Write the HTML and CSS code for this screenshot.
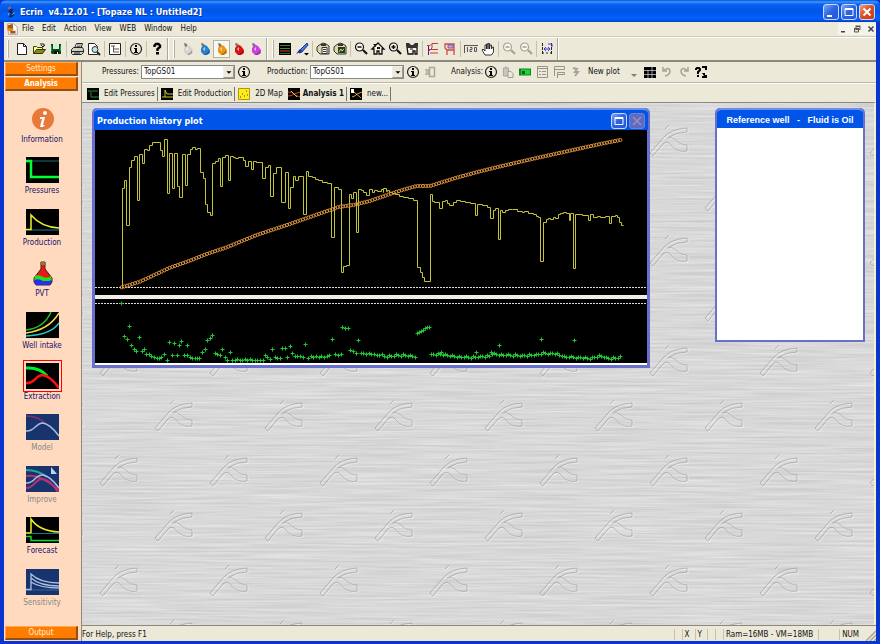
FILE: index.html
```html
<!DOCTYPE html>
<html lang="en">
<head>
<meta charset="utf-8">
<title>Ecrin v4.12.01 - [Topaze NL : Untitled2]</title>
<link rel="stylesheet" href="styles.css">
</head>
<body>
<svg class="defs" aria-hidden="true">
  <symbol id="info" viewBox="0 0 16 16"><circle cx="8" cy="8" r="5.5" fill="none" stroke="#222" stroke-width="1.2"/><path d="M7 4h2v2H7zM6 7h3v4h1v1H6v-1h1V8H6z"/></symbol>
  <symbol id="drop" viewBox="0 0 16 16"><path d="M5 2l3 2 2 1 3 4v3l-3 2H7l-3-3V7l2-2z" fill="currentColor"/><path d="M4 2l3 1v2L5 6z" fill="#777"/><path d="M6 8l2-2v4z" fill="#fff" opacity=".7"/><path d="M12 9v3l-3 2H7l4-3z" opacity=".3"/></symbol>
  <symbol id="lens" viewBox="0 0 16 16"><circle cx="6.500" cy="6" r="4" fill="#f8f8ef" stroke="currentColor" stroke-width="1.2"/><path d="M10 9l4 4" stroke="currentColor" stroke-width="2.200"/><path d="M4.500 6h4" stroke="currentColor" stroke-width="1.500"/></symbol>
  <symbol id="clip" viewBox="0 0 16 16"><path d="M3 5l3-2 2-1 3 1 3 2v8H5l-3-3V6z" fill="#d9d8ac" stroke="#333"/><path d="M6 3h5v2H6z" fill="#333"/></symbol>
  <symbol id="home" viewBox="0 0 16 16"><path d="M2 8l6-6 6 6h-2v5H9v-3H7v3H4V8z" fill="#f3f2e6" stroke="#111" stroke-width="1.300"/><path d="M3 3h3v3M7 6h3v2H7z" fill="#111"/></symbol>
</svg>
<div class="app">
  <header class="titlebar">
    <svg class="i16" viewBox="0 0 16 16"><path d="M5 2h3v3H5z" fill="#c05a48"/><path d="M8 4l3 1-2 2 3 4-3 3H5l3-4-3-3z" fill="#0b2668"/><path d="M4 9l2 1-1 2z" fill="#6cc"/><path d="M9 11l3-2" stroke="#ad7"/></svg>
    <h1>Ecrin&nbsp; v4.12.01 - [Topaze NL : Untitled2]</h1>
    <div class="winbtns">
      <button class="wb" aria-label="Minimize"><svg viewBox="0 0 14 14"><path d="M3 10h5v2H3z" fill="#fff"/></svg></button>
      <button class="wb" aria-label="Maximize"><svg viewBox="0 0 14 14"><path d="M3 3.500h8v7H3z" fill="none" stroke="#fff"/><path d="M3 3h8v2H3z" fill="#fff"/></svg></button>
      <button class="wb close" aria-label="Close"><svg viewBox="0 0 14 14"><path d="M3.500 3.500l7 7m0-7l-7 7" stroke="#fff" stroke-width="2"/></svg></button>
    </div>
  </header>
  <div class="frame">
    <nav class="menubar">
      <svg class="i16" viewBox="0 0 16 16"><path d="M3 2h7l4 4v8H4z" fill="#fff" stroke="#99a"/><circle cx="6" cy="7" r="3.500" fill="#e78a0c"/><path d="M3 4l6-2v5H4zM6 10h6v3H6z" fill="#a85514"/></svg>
      <a href="#">File</a><a href="#">Edit</a><a href="#">Action</a><a href="#">View</a><a href="#">WEB</a><a href="#">Window</a><a href="#">Help</a>
      <div class="mdi">
        <button aria-label="Minimize document"><svg viewBox="0 0 10 10"><path d="M3 7h4v1.500H3z" fill="#444"/></svg></button>
        <button aria-label="Restore document"><svg viewBox="0 0 10 10"><path d="M4 2.500h4v3H4zM2.500 5h4v3h-4z" fill="#ece9d8" stroke="#555"/><path d="M3.500 2h5M2 4.500h5" stroke="#555"/></svg></button>
        <button aria-label="Close document"><svg viewBox="0 0 10 10"><path d="M2.500 2.500l5 5m0-5l-5 5" stroke="#444" stroke-width="1.500"/></svg></button>
      </div>
    </nav>
    <div class="toolbar">
      <i class="grip"></i>
      <button class="tb" aria-label="New"><svg viewBox="0 0 16 16"><path d="M3.500 2.500h6l3 3v8h-9z" fill="#fff" stroke="#222"/><path d="M9.500 2.500v3h3" fill="none" stroke="#222"/></svg></button>
      <button class="tb" aria-label="Open"><svg viewBox="0 0 16 16"><path d="M2.500 12.500v-7h3l1 1h5v2" fill="#ef9" stroke="#440"/><path d="M2.500 12.500l3-4h9l-3 4z" fill="#8a8a10" stroke="#330"/><path d="M9 3h4v2l1-1-2 2-2-2" fill="none" stroke="#222"/></svg></button>
      <button class="tb" aria-label="Save"><svg viewBox="0 0 16 16"><path d="M3 3h10v10H4l-1-1z" fill="#0b4d18"/><path d="M5 3h6v5H5z" fill="#d5ecd5"/><path d="M3 5h1v5H3zM12 5h1v5h-1z" fill="#16a23a"/><path d="M6 10h5v3H6z" fill="#111"/><path d="M9 11h1v2H9z" fill="#fff"/></svg></button>
      <i class="sep"></i>
      <button class="tb" aria-label="Print"><svg viewBox="0 0 16 16"><path d="M5.500 7l2-4.500h6L12 7" fill="#fff" stroke="#222"/><path d="M8 4h4M7.500 5.500h4" stroke="#222" stroke-width=".7"/><path d="M2.500 8.500l2-2h9l1 2v3l-2 2h-9l-1-1z" fill="#cfcfc6" stroke="#222"/><path d="M3 10.500h11M5 12h6" stroke="#222"/></svg></button>
      <button class="tb" aria-label="Print preview"><svg viewBox="0 0 16 16"><path d="M2.500 2.500h6l3 3v8h-9z" fill="#fff" stroke="#222"/><circle cx="9" cy="8.500" r="3" fill="#bde6e8" stroke="#333"/><path d="M11 11l3 3" stroke="#222" stroke-width="2"/></svg></button>
      <i class="sep"></i>
      <button class="tb" aria-label="Tree"><svg viewBox="0 0 16 16"><path d="M2.500 2.500h11v11h-11z" fill="#fff" stroke="#222"/><path d="M4 5h4M6.500 5v6M6.500 8h3M6.500 11h4" stroke="#555"/><path d="M9 7h3v2H9zM9 10h3v2H9z" fill="#aaa"/></svg></button>
      <i class="sep"></i>
      <button class="tb" aria-label="Information"><svg><use href="#info"/></svg></button>
      <i class="sep"></i>
      <button class="tb" aria-label="Help"><svg viewBox="0 0 16 16"><path d="M5.500 6V4.500L7 3h2.500L11 4.500V6L8.500 8v2" fill="none" stroke="#000" stroke-width="2.400"/><path d="M7 11h3v2.500H7z"/></svg></button>
      <i class="edge"></i><i class="grip"></i>
      <button class="tb white" aria-label="Clear fluid"><svg><use href="#drop"/></svg></button>
      <button class="tb blue" aria-label="Water"><svg><use href="#drop"/></svg></button>
      <button class="tb orange pressed" aria-label="Oil"><svg><use href="#drop"/></svg></button>
      <button class="tb red" aria-label="Gas"><svg><use href="#drop"/></svg></button>
      <button class="tb pink" aria-label="Condensate"><svg><use href="#drop"/></svg></button>
      <i class="edge"></i><i class="grip tight"></i>
      <button class="tb" aria-label="List"><svg viewBox="0 0 16 16"><path d="M2 2h12v12H2z"/><path d="M3 4.500h10M3 7.500h10" stroke="#3a8a30"/><path d="M3 12.500h10" stroke="#2a7028"/><path d="M3 10h10" stroke="#e33"/></svg></button>
      <button class="tb" aria-label="Pen"><svg viewBox="0 0 16 16"><path d="M13 2l1 2-6 7-3 1 1-3z" fill="#5378d8" stroke="#16308e"/><path d="M2 13l4-5 2 2z" fill="#122a9c"/><path d="M10 12h5l-2.500 2.500z"/></svg></button>
      <i class="sep"></i>
      <button class="tb" aria-label="Copy"><svg viewBox="0 0 16 16"><use href="#clip"/><path d="M7 6.500h5v6H7z" fill="#fff" stroke="#333"/><path d="M8 8.500h3M8 10.500h3" stroke="#333"/></svg></button>
      <button class="tb" aria-label="Copy picture"><svg viewBox="0 0 16 16"><use href="#clip"/><path d="M6 6h7v6H6z" fill="#273b20"/><path d="M7 11l2-3 1 2 2-2" stroke="#cde36b" fill="none"/></svg></button>
      <i class="sep"></i>
      <button class="tb" aria-label="Zoom out"><svg><use href="#lens"/></svg></button>
      <button class="tb" aria-label="Reset zoom"><svg><use href="#home"/></svg></button>
      <button class="tb" aria-label="Zoom in"><svg viewBox="0 0 16 16"><use href="#lens"/><path d="M6.500 4v4" stroke="#000" stroke-width="1.500"/></svg></button>
      <button class="tb" aria-label="Zoom all"><svg viewBox="0 0 16 16"><path d="M3 6h10v7h-2v-3H9v3H4z" fill="#f3f2e6" stroke="#111" stroke-width="1.300"/><path d="M2 2h3l2 2h2l2-2h3v3l-2 2H4L2 5z" fill="#333"/><path d="M6 8h3" stroke="#111"/></svg></button>
      <i class="sep"></i>
      <button class="tb" aria-label="Axes"><svg viewBox="0 0 16 16"><path d="M3.500 5v9" stroke="#22c"/><path d="M2 4.500h3l2-2h6M7 3v4l-4 4M4 8.500h9M5 12h8" fill="none" stroke="#c43a32"/></svg></button>
      <button class="tb" aria-label="Overlay"><svg viewBox="0 0 16 16"><path d="M5 14V9L3 7V3h9v11M5 9h7" fill="none" stroke="#d04a40" stroke-width="1.300"/><path d="M6 4h5v3H6z" fill="#c7b0df" stroke="#75a"/></svg></button>
      <i class="sep"></i>
      <button class="tb" aria-label="Scale"><svg viewBox="0 0 16 16"><path d="M1.500 4v8M1 4.500h14M4.500 6v5M7 6.500h2v2H7v2h2M11.500 6.500h2v4h-2z" fill="none" stroke="#555"/></svg></button>
      <button class="tb" aria-label="Pan"><svg viewBox="0 0 16 16"><path d="M5 14l-3-5 1-1 2 2V4h1.500v4V3H8v5-5.500h1.500V8l.5-4h1.500v4l1-2h1v5l-2 3z" fill="#fff" stroke="#222" stroke-width=".9"/></svg></button>
      <i class="sep"></i>
      <button class="tb off" aria-label="Previous zoom"><svg><use href="#lens"/></svg></button>
      <button class="tb off" aria-label="Next zoom"><svg><use href="#lens"/></svg></button>
      <i class="sep"></i>
      <button class="tb" aria-label="Fit scale"><svg viewBox="0 0 16 16"><path d="M3.500 2v12M12.500 2v12" stroke="#222" stroke-dasharray="3 1"/><path d="M3 12h10" stroke="#222" stroke-dasharray="2 2"/><path d="M5 8h6M7 6L5 8l2 2M9 6l2 2-2 2M9 3h4v3" fill="none" stroke="#3a3ad8"/></svg></button>
      <i class="edge"></i>
    </div>
    <div class="body">
      <aside class="sidebar">
        <button class="sb">Settings</button>
        <button class="sb on">Analysis</button>
        <div class="steps">
          <button class="step"><svg viewBox="0 0 33 26"><circle cx="17" cy="13" r="11" fill="#e8793a"/><circle cx="19" cy="7" r="2" fill="#fff"/><path d="M14 11h5l-2 8h2l-2 2h-3l2-8h-2z" fill="#fff"/></svg><span>Information</span></button>
          <button class="step"><svg viewBox="0 0 33 26"><path d="M0 0h33v26H0z"/><path d="M5 4h28" stroke="#137070"/><path d="M0 4h5v16h28" fill="none" stroke="#0f3" stroke-width="2.500"/></svg><span>Pressures</span></button>
          <button class="step"><svg viewBox="0 0 33 26"><path d="M0 0h33v26H0z"/><path d="M0 21h33" stroke="#148080"/><path d="M0 20.500h5V6Q15 18 33 19" fill="none" stroke="#ee3" stroke-width="1.500"/></svg><span>Production</span></button>
          <button class="step"><svg viewBox="0 0 33 26"><path d="M15 2h4v7l7 9v4l-2 3H10l-2-3v-4l7-9z" fill="#e91818" stroke="#421"/><path d="M9 16q4-2 8 1 5 2 8-1l1 5H8z" fill="#1de31d"/><path d="M8 20q5-2 9 1 4 1 9-1v2l-2 3H10l-2-3z" fill="#2330f0"/><path d="M14 2h6v3h-6z" fill="#8a7340"/></svg><span>PVT</span></button>
          <button class="step"><svg viewBox="0 0 33 26"><path d="M0 0h33v26H0z"/><path d="M0 18Q18 16 25 0" fill="none" stroke="#2b3" stroke-width="1.500"/><path d="M0 21Q23 18 33 1" fill="none" stroke="#ed3" stroke-width="1.500"/><path d="M0 24Q25 23 33 11" fill="none" stroke="#2cc" stroke-width="1.500"/></svg><span>Well intake</span></button>
          <button class="step sel"><svg viewBox="0 0 33 26"><path d="M0 0h33v26H0z"/><path d="M0 5q14-1 21 8" fill="none" stroke="#0e2" stroke-width="3"/><path d="M0 20c9 1 9-8 17-8q7 1 16 13" fill="none" stroke="#f11" stroke-width="2.500"/></svg><span>Extraction</span></button>
          <button class="step" disabled><svg viewBox="0 0 33 26"><path d="M0 0h33v26H0z" fill="#17346e"/><path d="M0 2q12 0 20 8" fill="none" stroke="#8b2d69" stroke-width="1.500"/><path d="M0 17c9 1 9-8 17-8q7 1 16 13" fill="none" stroke="#aabbdc" stroke-width="1.500"/></svg><span>Model</span></button>
          <button class="step" disabled><svg viewBox="0 0 33 26"><path d="M0 0h33v26H0z" fill="#17346e"/><path d="M0 4q12 0 21 7" fill="none" stroke="#24a79a" stroke-width="2"/><path d="M0 10q14-2 33 14M0 22c9 0 9-10 17-9q7 1 15 13" fill="none" stroke="#b93072" stroke-width="2"/><path d="M0 17c9 1 9-9 17-8q7 1 16 13" fill="none" stroke="#a9c0df" stroke-width="1.500"/><path d="M25 1l6 7h-6z" fill="#b7d9ef"/></svg><span>Improve</span></button>
          <button class="step"><svg viewBox="0 0 33 26"><path d="M0 0h33v26H0z"/><path d="M0 16h5V2q8 12 28 13" fill="none" stroke="#ee2" stroke-width="1.500"/><path d="M5 16.500h28" stroke="#137a8a"/><path d="M0 19.500h5v4h28" fill="none" stroke="#0d3" stroke-width="1.500"/></svg><span>Forecast</span></button>
          <button class="step" disabled><svg viewBox="0 0 33 26"><path d="M0 0h33v26H0z" fill="#17346e"/><path d="M0 21h33" stroke="#3c6198"/><path d="M0 20.500h5V5q9 9 28 9M5 9q9 8 28 8M5 13q9 6 28 6" fill="none" stroke="#abc0e0" stroke-width="1.300"/></svg><span>Sensitivity</span></button>
        </div>
        <button class="sb">Output</button>
      </aside>
      <main class="main">
        <form class="formbar">
          <label for="pr">Pressures:</label>
          <div class="combo"><select id="pr"><option>TopGS01</option></select><svg viewBox="0 0 11 11"><path d="M3 4.500h6l-3 3z"/></svg></div>
          <button type="button" class="tb" aria-label="Pressure info"><svg><use href="#info"/></svg></button>
          <label for="pd" class="second">Production:</label>
          <div class="combo"><select id="pd"><option>TopGS01</option></select><svg viewBox="0 0 11 11"><path d="M3 4.500h6l-3 3z"/></svg></div>
          <button type="button" class="tb" aria-label="Production info"><svg><use href="#info"/></svg></button>
          <button type="button" class="tb" aria-label="Copy gauge"><svg viewBox="0 0 16 16"><path d="M7.500 3.500h5v9h-5zM3 6h4M4 8h3M3 10h4" fill="none" stroke="#aaa79b" stroke-width="1.500"/></svg></button>
          <span class="third">Analysis:</span>
          <button type="button" class="tb" aria-label="Analysis info"><svg><use href="#info"/></svg></button>
          <button type="button" class="tb" aria-label="Paste"><svg viewBox="0 0 16 16"><path d="M3.500 4h5v8h-5zM5 3h2" fill="#c9c6ba" stroke="#aaa89d"/><path d="M8 7.500h3l2 2v4H8z" fill="#eceade" stroke="#a19f94"/></svg></button>
          <button type="button" class="tb" aria-label="Display"><svg viewBox="0 0 16 16"><path d="M2 4.500h12v7H2z" fill="#1b7d24"/><path d="M4 5.500h9v5H4z" fill="#18d736"/><path d="M5 7h3v3H5z" fill="#095d16"/></svg></button>
          <button type="button" class="tb" aria-label="Table"><svg viewBox="0 0 16 16"><path d="M3.500 2.500h10v11h-10zM3 4.500h10M5 7.500h2m1 0h4m-7 3h2m1 0h4" fill="none" stroke="#98968b"/></svg></button>
          <button type="button" class="tb" aria-label="Cascade"><svg viewBox="0 0 16 16"><path d="M3.500 12V2.500h10v3h-10M6.500 14V8.500h7v2h-7" fill="none" stroke="#98968b"/></svg></button>
          <button type="button" class="tb" aria-label="Curve"><svg viewBox="0 0 16 16"><path d="M5 4l4 1-2 3h3l-3 4" fill="none" stroke="#a6a398" stroke-width="2"/></svg></button>
          <button type="button" class="txt">New plot</button>
          <button type="button" class="tb" aria-label="Plot types"><svg viewBox="0 0 16 16"><path d="M6 10h6l-3 3z" fill="#807e74"/></svg></button>
          <button type="button" class="tb" aria-label="Tile"><svg viewBox="0 0 16 16"><path d="M2 3h12v11H2z"/><path d="M2 6.500h12M2 10.500h12M6 6v8M10 3v11" stroke="#ddd" stroke-width=".7"/></svg></button>
          <button type="button" class="tb" aria-label="Undo"><svg viewBox="0 0 16 16"><path d="M4 3v4h4M4 7q6-5 7 0 0 4-5 5" fill="none" stroke="#a6a398" stroke-width="1.500"/></svg></button>
          <button type="button" class="tb" aria-label="Redo"><svg viewBox="0 0 16 16"><path d="M12 3v4H8M12 7Q6 2 5 7q0 4 5 5" fill="none" stroke="#a6a398" stroke-width="1.500"/></svg></button>
          <button type="button" class="tb" aria-label="What is this"><svg viewBox="0 0 16 16"><path d="M3 6V5l1-1h2l1 1v1L5 8v2" fill="none" stroke="#000" stroke-width="2"/><path d="M4 11h2v2H4zM9 2h5v4h-2V4H9zM9 9h3v2h2v3H9v-2h2z"/></svg></button>
        </form>
        <nav class="tabs">
          <button class="tab"><svg viewBox="0 0 12 12"><path d="M0 0h12v12H0z"/><path d="M1 3h3v6h8M5 3h6" fill="none" stroke="#1a9433"/></svg><span>Edit Pressures</span></button>
          <button class="tab"><svg viewBox="0 0 12 12"><path d="M0 0h12v12H0z"/><path d="M1 9h3V2l2 4h6M4 9h8" fill="none" stroke="#cc2"/></svg><span>Edit Production</span></button>
          <button class="tab flat"><svg viewBox="0 0 12 12"><path d="M.500.500h11v11H.500z" fill="#ffec1c" stroke="#a89a10"/><path d="M2 9h1M4 6h1m1 2h1m1-5h1m0 4h1" stroke="#630"/></svg><span>2D Map</span></button>
          <button class="tab cur"><svg viewBox="0 0 12 12"><path d="M0 0h12v12H0z"/><path d="M0 4q4-1 7 3l5 2M0 8q4 0 6-2l6-2" fill="none" stroke="#c44a20"/><path d="M3 3l6 6" stroke="#d9be60"/></svg><span>Analysis 1</span></button>
          <button class="tab"><svg viewBox="0 0 12 12"><path d="M0 0h12v12H0z"/><path d="M1 1h3v4H1z" fill="#fff"/><path d="M2 9q4-1 5-3l5-2M4 4l7 6" fill="none" stroke="#d9a040"/></svg><span>new...</span></button>
        </nav>
        <section class="workspace">
          <svg class="paper" aria-hidden="true">
            <defs>
              <filter id="brush" x="0" y="0" width="100%" height="100%" color-interpolation-filters="sRGB"><feTurbulence type="fractalNoise" baseFrequency="0.012 0.5" numOctaves="3" seed="7"/><feColorMatrix values="0.15 0 0 0 .772  0.15 0 0 0 .772  0.15 0 0 0 .772  0 0 0 0 1"/></filter>
              <g id="mark" fill="none"><path d="M1 29L15 13Q22 5 38 4v4Q28 8 20 13M1 29l3 3L14 20q4-4 8 1 6 8 16 6v-6q-7 0-11-5-4-4-9-2M16 5l4-4"/></g>
              <pattern id="tile" x="71" y="73" width="110" height="110" patternUnits="userSpaceOnUse">
                <g stroke="#fff" stroke-opacity=".4" transform="translate(2 4)"><use href="#mark"/><use href="#mark" x="55" y="55"/></g>
                <g stroke="#8c8c8c" stroke-opacity=".5" transform="translate(1 3)"><use href="#mark"/><use href="#mark" x="55" y="55"/></g>
              </pattern>
            </defs>
            <rect width="100%" height="100%" filter="url(#brush)"/>
            <rect width="100%" height="100%" fill="url(#tile)"/>
          </svg>
          <article class="win plot">
            <header><h2>Production history plot</h2>
              <button class="wb" aria-label="Maximize plot"><svg viewBox="0 0 14 14"><path d="M3 3.500h8v7H3z" fill="none" stroke="#fff"/><path d="M3 3h8v2H3z" fill="#fff"/></svg></button>
              <button class="wb dim" aria-label="Close plot" disabled><svg viewBox="0 0 14 14"><path d="M3 3l8 8m0-8l-8 8" stroke="#9d8fb5" stroke-width="1.500"/></svg></button>
            </header>
            <div class="charts">
              <svg viewBox="95 130 552 165" role="img" aria-label="Rate and cumulative production">
                <path d="M95 287.500h552" stroke="#ddd" stroke-dasharray="2 1"/>
                <path id="rate" fill="none" stroke="#c3c335"/>
                <g id="cumulative" fill="none" stroke="#dc9440"/>
              </svg>
              <svg viewBox="95 299 552 64" role="img" aria-label="Residual">
                <path d="M95 303.500h552" stroke="#ddd" stroke-dasharray="2 1"/>
                <path id="residual" fill="none" stroke="#1fc832"/>
              </svg>
            </div>
          </article>
          <article class="win ref">
            <header><h2>Reference well&nbsp;&nbsp; -&nbsp;&nbsp; Fluid is Oil</h2></header>
            <div class="blank"></div>
          </article>
        </section>
        <footer class="status"><span class="msg">For Help, press F1</span><span class="cell"></span><span class="cell">X</span><span class="cell">Y</span><span class="cell"></span><span class="cell"></span><span class="cell">Ram=16MB - VM=18MB</span><span class="cell wide"></span><span class="cell">NUM</span>
          <svg class="resize" viewBox="0 0 12 12"><path d="M2 12L12 2M6 12l6-6M10 12l2-2" stroke="#aaa692" stroke-width="1.500"/></svg>
        </footer>
      </main>
    </div>
  </div>
</div>
<script src="app.js"></script>
</body>
</html>
```
FILE: styles.css
```css
* { box-sizing: border-box; }
html, body { height: 100%; margin: 0; }
body { background: #0831d9; color: #111; font: 8px/12px "DejaVu Sans Condensed", "DejaVu Sans", sans-serif; }
button, select { font: inherit; color: inherit; margin: 0; padding: 0; border: 0; background: none; }
svg { display: block; overflow: hidden; }
.defs { position: absolute; width: 0; height: 0; }
.app { height: 100vh; min-height: 560px; display: flex; flex-direction: column; background: #0a36d0; border-radius: 6px 6px 0 0; }
.titlebar { height: 22px; flex: none; display: flex; align-items: center; padding: 2px 5px 0 3px; gap: 1px; border-radius: 6px 6px 0 0; background: linear-gradient(#0a4fd0 0, #3a94ff 8%, #0a60f0 20%, #0055e5 50%, #0062ff 85%, #0040c8 100%); }
.titlebar h1 { flex: 1; margin: 0; color: #fff; font: bold 9px/14px "DejaVu Sans Condensed", "DejaVu Sans", sans-serif; text-shadow: 1px 1px #0838a8; }
.i16 { width: 16px; height: 14px; flex: none; }
.winbtns { display: flex; gap: 2px; }
.wb { width: 16px; height: 16px; flex: none; display: grid; place-items: center; border: 1px solid #c8d8ff; border-radius: 3px; background: linear-gradient(135deg, #7ba4f5, #2a62e0 50%, #2458d8); }
.wb svg { width: 14px; height: 14px; }
.wb.close { background: linear-gradient(135deg, #f0a080, #dc4a20 50%, #c83c14); }
.wb.dim { border-color: #6f80ce; background: #5c6cc4; }
.frame { flex: 1; min-height: 0; display: flex; flex-direction: column; margin: 0 4px 3px; background: #ece9d8; }
.menubar { height: 15px; flex: none; display: flex; align-items: center; border-bottom: 1px solid #d0ccbc; }
.menubar .i16 { margin-right: 2px; }
.menubar a { color: inherit; text-decoration: none; margin-right: 8px; }
.mdi { margin-left: auto; display: flex; gap: 4px; background: #f4f3ec; }
.mdi svg { width: 10px; height: 12px; }
.toolbar { height: 25px; flex: none; display: flex; align-items: center; border-top: 1px solid #fff; border-bottom: 2px solid #8b887c; }
.tb { width: 17px; height: 18px; flex: none; display: grid; place-items: center; }
.tb > svg { width: 16px; height: 16px; }
.grip { width: 1px; height: 18px; margin: 0 5px 0 3px; background: #fff; box-shadow: 1px 0 #b5b2a2; }
.edge { width: 1px; height: 22px; margin: 0 2px; background: #aaa797; box-shadow: 1px 0 #fff; }
.grip.tight { margin-right: 3px; }
.sep { width: 1px; height: 16px; margin: 0 1px 0 2px; background: #c5c1ae; }
.white { color: #d3d3d3; } .blue { color: #2c82c8; } .orange { color: #ef9414; } .red { color: #d81414; } .pink { color: #cf3ce0; }
.off { color: #a5a296; }
.pressed { background: #f8f7f0; border: 1px solid #b7b3a3; }
.body { flex: 1; min-height: 0; display: flex; }
.sidebar { width: 78px; flex: none; display: flex; flex-direction: column; gap: 1px; padding: 0 3px 1px 1px; background: #ffdabe; border-right: 1px solid #8d8a7e; }
.sb { height: 14px; flex: none; color: #ffeedd; background: #ff7c00; border: solid; border-width: 1px 2px 2px 1px; border-color: #ffa850 #8c5018 #8c5018 #ffa850; line-height: 11px; }
.sb.on { font-weight: bold; color: #fff; }
.steps { flex: 1; min-height: 0; display: grid; grid-template-rows: repeat(10, 1fr); padding: 14px 0 5px 1px; }
.step { display: flex; flex-direction: column; align-items: center; gap: 1px; color: #20106c; }
.step svg { width: 33px; height: 26px; flex: none; }
.step[disabled] { color: #888; }
.step.sel svg { outline: 1px solid #f00; outline-offset: 2px; }
.step span { margin-top: 1px; line-height: 11px; }
.main { flex: 1; min-width: 0; display: flex; flex-direction: column; }
.formbar { height: 21px; flex: none; display: flex; align-items: center; padding-left: 20px; border-bottom: 1px solid #bbb7a7; }
.formbar label { width: 39px; white-space: nowrap; }
.formbar .second { width: 43px; margin-left: 15px; }
.third { width: 31px; margin-left: 13px; white-space: nowrap; }
.combo { position: relative; width: 94px; height: 14px; border: 1px solid #8b8a80; background: #fff; }
.combo select { appearance: none; width: 100%; height: 12px; padding-left: 2px; display: block; }
.combo svg { position: absolute; top: 0; right: 0; width: 11px; height: 12px; background: #ece9d8; border: 1px outset #eee; pointer-events: none; }
.txt { width: 36px; margin-left: 4px; text-align: left; white-space: nowrap; }
.tabs { height: 19px; flex: none; display: flex; align-items: center; padding: 2px 0 0 5px; border-top: 1px solid #fff; }
.tab { display: flex; align-items: center; gap: 5px; height: 14px; padding-right: 2px; margin-right: 3px; border-right: 1px solid #77756a; white-space: nowrap; }
.tab svg { width: 12px; height: 12px; }
.tab.flat { border: 0; margin-right: 3px; }
.tab.cur { font-weight: bold; gap: 3px; }
.workspace { position: relative; flex: 1; min-height: 0; overflow: hidden; background: #d8d8d8; border-top: 1px solid #8b887c; border-right: 2px solid #f5efce; }
.paper { position: absolute; inset: 0; width: 100%; height: 100%; }
.win { position: absolute; display: flex; flex-direction: column; border: 2px solid #6870cc; border-top: 0; border-radius: 5px 5px 0 0; background: #6870cc; }
.win header { height: 20px; flex: none; display: flex; align-items: center; gap: 2px; padding: 2px 3px 0; border-top: 2px solid #6b8fe8; border-radius: 5px 5px 0 0; background: #0055e8; }
.win h2 { margin: 0; color: #fff; white-space: nowrap; }
.plot { left: 10px; top: 5px; width: 558px; }
.plot header { height: 22px; }
.plot h2 { flex: 1; font: bold 9px/12px "DejaVu Sans Condensed", "DejaVu Sans", sans-serif; }
.charts { display: flex; flex-direction: column; gap: 4px; margin: 0 1px 1px; background: #f0eee6; border-bottom: 2px solid #fff; }
.charts svg { width: 100%; background: #000; }
.ref { left: 633px; top: 5px; width: 150px; }
.ref header { justify-content: center; }
.ref h2 { font: bold 9px/12px "Liberation Sans", sans-serif; }
.blank { height: 212px; background: #fff; }
.status { height: 16px; flex: none; display: flex; align-items: center; gap: 3px; padding-top: 2px; border-top: 1px solid #8b887c; }
.msg { flex: 1; }
.cell { min-width: 3px; height: 11px; padding: 0 2px; border: solid #c6c2b0; border-width: 0 0 0 1px; white-space: nowrap; line-height: 11px; }
.cell.wide { width: 18px; }
.resize { width: 12px; height: 12px; }
```
FILE: app.js
```js
// Survey units are thirds of a pixel, measured from the plot origin.
const X0 = 90, Y0 = 105, UNIT = 3;
const px = v => Math.round(X0 + v / UNIT) + 0.5;
const py = v => Math.round(Y0 + v / UNIT) + 0.5;
const pairs = text => text.trim().split(/\s*,\s*/).map(p => p.split(' ').map(Number));

// Each entry: time at which a rate begins, and its level.
const rates = pairs(`95 250,103 226,109 360,116 186,124 166,131 153,140 286,148 148,155 175,163 131,171 136,177 119,186 110,209 135,216 153,223 102,231 263,238 145,246 250,253 145,262 243,268 277,277 148,285 241,292 148,299 131,306 127,314 132,321 129,329 202,338 218,344 297,352 320,360 330,367 175,375 169,383 160,390 243,397 155,404 151,413 226,420 154,428 157,436 160,443 157,459 166,466 184,473 169,482 192,488 169,497 171,517 220,526 187,533 181,541 274,550 203,557 186,572 292,586 202,593 310,601 246,608 214,616 226,624 214,640 328,647 197,655 214,665 217,675 221,685 226,695 232,710 235,722 397,731 247,745 253,752 500,760 482,767 479,776 268,783 278,790 262,797 382,805 253,812 255,820 262,828 270,836 253,845 260,852 255,860 258,872 253,888 258,897 261,905 265,880 261,880 250,890 256,902 262,915 268,928 272,940 276,955 280,970 284,981 485,989 500,995 517,1003 528,1019 268,1025 288,1033 292,1048 309,1056 289,1065 286,1072 293,1078 301,1088 290,1098 284,1110 288,1125 292,1140 295,1154 331,1162 296,1175 300,1190 305,1199 340,1208 316,1214 308,1223 401,1229 316,1235 322,1245 314,1255 311,1265 313,1280 318,1295 322,1303 319,1315 324,1328 328,1337 332,1344 337,1351 469,1360 350,1367 343,1373 338,1381 341,1389 335,1396 340,1403 328,1410 325,1420 321,1428 325,1436 345,1441 325,1449 490,1456 327,1475 330,1493 345,1501 328,1510 336,1520 334,1530 335,1545 332,1556 353,1562 334,1575 329,1582 337,1588 350,1593 361`)
  .sort((a, b) => a[0] - b[0]);
let d = `M${px(95)} ${py(547)}`;
for (const [x, y] of rates) d += `H${px(x)}V${py(y)}`;
document.getElementById('rate').setAttribute('d', d + `H${px(1598)}`);

// Cumulative curve, sampled at equal time steps.
const total = pairs(`95 547,150 530,240 488,300 467,350 447,410 427,500 390,600 357,700 322,730 312,745 306,790 300,840 288,900 267,940 254,980 243,1020 243,1100 218,1170 199,1240 182,1340 159,1440 137,1540 115,1596 104`);
let circles = '', k = 0;
for (let x = 95; x <= 1596; x += 8) {
  while (x > total[k + 1][0]) k++;
  const [xa, ya] = total[k], [xb, yb] = total[k + 1];
  const y = ya + (yb - ya) * (x - xa) / (xb - xa);
  circles += `<circle cx="${X0 + x / UNIT}" cy="${Y0 + y / UNIT}" r="1.6"/>`;
}
document.getElementById('cumulative').innerHTML = circles;

const residuals = pairs(`94 595,116 664,103 692,110 703,147 695,124 721,131 731,139 737,155 739,162 733,168 748,177 747,184 752,192 757,200 759,207 760,214 757,221 748,230 766,237 712,253 715,268 719,274 708,290 721,246 750,262 751,283 751,291 749,299 755,306 758,314 759,321 760,328 760,336 740,344 733,352 706,359 699,367 691,374 745,382 748,389 750,396 733,404 757,411 765,419 742,426 764,434 765,442 763,449 765,457 766,465 763,472 765,480 762,487 764,494 765,502 766,510 764,518 764,525 751,532 756,540 762,547 732,554 757,562 759,570 760,577 729,584 728,592 756,600 723,607 745,614 752,622 753,630 752,638 755,646 717,654 758,662 753,670 756,678 753,686 755,694 754,702 755,710 754,718 751,727 701,735 748,744 749,752 748,756 667,764 670,773 670,781 736,789 738,797 745,805 706,812 743,820 745,828 748,836 745,844 748,852 747,860 749,868 749,981 685,987 682,993 678,999 674,1005 670,1011 667,1018 666,1054 741,1159 741,1202 741,1227 721,1354 703,1453 706`);
const floor = pairs(`876 749,890 754,910 751,940 749,975 753,979 753,1020 748,1060 747,1100 754,1150 756,1200 752,1205 745,1240 749,1290 751,1345 748,1360 742,1400 747,1420 754,1450 756,1500 759,1530 752,1560 761,1595 754`);
let j = 0;
for (let x = 876; x < 1594; x += 7) {
  while (x > floor[j + 1][0]) j++;
  if (x > 979 && x < 1020) continue;
  const [xa, ya] = floor[j], [xb, yb] = floor[j + 1];
  residuals.push([x, ya + (yb - ya) * (x - xa) / (xb - xa) + (x % 3 - 1) * 2]);
}
document.getElementById('residual').setAttribute('d',
  residuals.map(([x, y]) => `M${px(x) - 2} ${py(y)}h4m-2 -2v4`).join(''));
```
